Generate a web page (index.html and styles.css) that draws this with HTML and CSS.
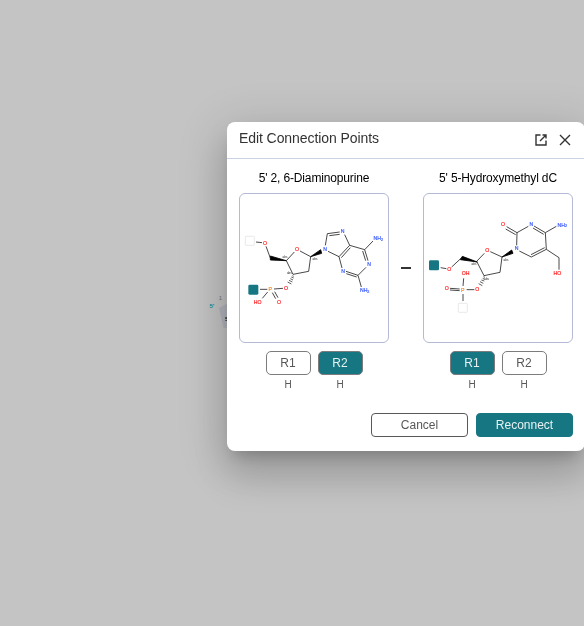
FILE: index.html
```
<!DOCTYPE html>
<html lang="en">
<head>
<meta charset="utf-8">
<title>Edit Connection Points</title>
<link rel="stylesheet" href="styles.css">
</head>
<body>
<svg class="canvas" viewBox="200 280 40 60" aria-hidden="true">
  <path class="monomer" d="M219 308 L228 303 H240 V328 H223.5 Z"/>
  <text class="canvas-end" x="209.5" y="308">5'</text>
  <text class="canvas-num" x="218.8" y="299.7">1</text>
  <text class="canvas-label" x="225" y="321">5</text>
</svg>
<section class="dialog" role="dialog">
  <header class="dialog-header">
    <h1>Edit Connection Points</h1>
    <div class="header-actions">
      <svg class="icon" viewBox="0 0 16 16"><path d="M7.5 3H3v10h10V8.5M9.5 3H13v3.5M13 3L7 9"/></svg>
      <svg class="icon" viewBox="0 0 16 16"><path d="M3 3l10 10M13 3L3 13"/></svg>
    </div>
  </header>
  <main class="points">
    <div class="monomer-column">
      <h2>5' 2, 6-Diaminopurine</h2>
      <div class="structure">
        <svg viewBox="6 6 444 444">
          <rect class="free" x="22" y="133" width="27" height="27" rx="2"/>
          <rect class="used" x="31" y="278" width="30" height="30" rx="4"/>
          <path class="bond" d="M54 150L72 152M84 163L97 198M145 206L169 180M186 177L218 194L212 238L165 247L145 206M262 160L268 125M335 160L320 128M335 160L303 194L270 178M303 194L312 228M360 250L384 226M390 206L380 173L335 160M380 173L405 147M360 250L370 285M66 292H88M108 291L135 289M89 300L73 319"/>
          <path class="bond" d="M268 125L305 120M274 131L305 127M337 167L310 197M374 177L383 206M324 238L360 250M325 245L356 255M103 302L113 320M110 299L120 317"/>
          <path class="wedge" d="M145 206L97 192V204Z M218 194L248 173L251 184Z"/>
          <path class="hash" d="M163 251L167 253M160 255L167 258M157 260L165 264M153 265L163 270M149 270L160 276"/>
          <g class="oxygen"><text x="81" y="159">O</text><text x="177" y="177">O</text><text x="144" y="294">O</text><text x="123" y="336">O</text><text x="59" y="336">HO</text></g>
          <text class="phosphorus" x="97" y="297">P</text>
          <g class="nitrogen"><text x="314" y="123">N</text><text x="261" y="177">N</text><text x="393" y="222">N</text><text x="315" y="243">N</text><text x="421" y="144">NH<tspan class="sub" dy="2">2</tspan></text><text x="380" y="300">NH<tspan class="sub" dy="2">2</tspan></text></g>
          <g class="stereo"><text x="141" y="197">abs</text><text x="154" y="247">abs</text><text x="231" y="203">abs</text></g>
        </svg>
      </div>
      <div class="attachments">
        <div class="attachment"><button>R1</button><span>H</span></div>
        <div class="attachment"><button class="selected">R2</button><span>H</span></div>
      </div>
    </div>
    <div class="link"></div>
    <div class="monomer-column">
      <h2>5' 5-Hydroxymethyl dC</h2>
      <div class="structure">
        <svg viewBox="6 6 444 444">
          <rect class="used" x="21" y="205" width="30" height="30" rx="4"/>
          <rect class="free" x="109" y="334" width="27" height="27" rx="2"/>
          <path class="bond" d="M56 227L73 230M89 225L118 198M164 208L187 184M205 179L240 195L234 241L186 251L164 208M284 160L285 122L319 103M336 102L370 122L373 172L411 197V233M370 122L403 103M373 172L328 195L292 177M125 259L123 282M123 306V327M134 293H157"/>
          <path class="bond" d="M285 122L254 104M281 128L251 111M333 108L365 127M368 167L327 188M113 291L84 289M113 296L84 294"/>
          <path class="wedge" d="M166 210L121 193L115 203Z M240 195L269 174L273 184Z"/>
          <path class="hash" d="M184 254L189 256M182 259L188 262M178 264L187 267M174 269L184 274M170 275L181 281"/>
          <g class="oxygen"><text x="243" y="102">O</text><text x="196" y="180">O</text><text x="82" y="237">O</text><text x="131" y="249">OH</text><text x="74" y="294">O</text><text x="166" y="297">O</text><text x="406" y="249">HO</text></g>
          <text class="phosphorus" x="122" y="299">P</text>
          <g class="nitrogen"><text x="328" y="102">N</text><text x="284" y="174">N</text><text x="421" y="104">NH<tspan class="sub" dy="1">2</tspan></text></g>
          <g class="stereo"><text x="156" y="220">abs</text><text x="194" y="263">abs</text><text x="252" y="206">abs</text></g>
        </svg>
      </div>
      <div class="attachments">
        <div class="attachment"><button class="selected">R1</button><span>H</span></div>
        <div class="attachment"><button>R2</button><span>H</span></div>
      </div>
    </div>
  </main>
  <footer class="dialog-footer">
    <button class="cancel">Cancel</button>
    <button class="reconnect">Reconnect</button>
  </footer>
</section>
</body>
</html>
```
FILE: styles.css
```
* { box-sizing: border-box; }
html, body { margin: 0; width: 100%; height: 100%; overflow: hidden; }
body {
  padding: 122px 0 0 227px;
  background: #c4c4c4;
  font-family: "Liberation Sans", Arial, sans-serif;
}
.canvas { position: absolute; left: 200px; top: 280px; width: 40px; height: 60px; }
.monomer { fill: #b4b4be; }
.canvas-end { fill: #168f98; font-size: 6px; font-weight: bold; }
.canvas-num { fill: #777; font-size: 6px; }
.canvas-label { fill: #222; font-size: 6px; font-weight: bold; }
.dialog {
  position: relative;
  width: 358px;
  height: 329px;
  border-radius: 8px;
  background: #fff;
  box-shadow: 0 11px 15px -7px rgba(0, 0, 0, .2), 0 24px 38px 3px rgba(0, 0, 0, .14), 0 9px 46px 8px rgba(0, 0, 0, .12);
  will-change: transform;
}
.dialog-header {
  display: flex;
  justify-content: space-between;
  height: 37px;
  padding: 8px 12px 0;
  border-bottom: 1px solid #cad3e4;
}
h1, h2 { margin: 0; font-weight: 400; white-space: nowrap; }
h1 { color: #333; font-size: 14px; line-height: 17px; letter-spacing: -.08px; }
.header-actions { display: flex; gap: 8px; padding-top: 2px; }
.icon { width: 16px; height: 16px; fill: none; stroke: #333; stroke-width: 1.4; }
.points { display: flex; padding: 12px 12px 0; }
.monomer-column { width: 150px; }
h2 { height: 22px; color: #000; font-size: 12px; line-height: 15px; text-align: center; letter-spacing: -.15px; }
.structure { width: 150px; height: 150px; border: 1px solid #b4b9d6; border-radius: 6px; }
.structure svg { display: block; width: 148px; height: 148px; }
.link { width: 10px; height: 2px; margin: 96px 12px 0; background: #333; }
.attachments { display: flex; justify-content: center; gap: 7px; margin-top: 8px; }
.attachment { width: 45px; text-align: center; }
.attachment span { display: block; margin-top: 4px; color: #585858; font-size: 10px; line-height: 12px; }
button {
  display: block;
  width: 45px;
  height: 24px;
  padding: 0;
  border: 1px solid #7c7c7f;
  border-radius: 5px;
  background: #fff;
  color: #585858;
  font: 12px/22px "Liberation Sans", Arial, sans-serif;
}
button.selected { background: #167782; color: #e6f1f2; }
.dialog-footer { display: flex; justify-content: flex-end; gap: 8px; padding: 22px 12px 0; }
.dialog-footer button { width: 97px; border-color: #585858; border-radius: 4px; }
.dialog-footer .reconnect { border-color: #167782; background: #167782; color: #e6f1f2; }
.structure text { font-size: 15.5px; text-anchor: middle; stroke-width: .6; }
.bond { fill: none; stroke: #1a1a1a; stroke-width: 2.4; }
.hash { fill: none; stroke: #111; stroke-width: 2; }
.wedge { fill: #000; stroke: #000; stroke-width: 2.5; }
.free { fill: #fff; stroke: #e4e4e4; stroke-width: 2.5; }
.used { fill: #167782; }
.oxygen { fill: #ff2525; stroke: #ff2525; }
.nitrogen { fill: #4060ff; stroke: #4060ff; }
.phosphorus { fill: #f09030; stroke: #f09030; }
.structure .sub { font-size: 11px; }
.structure .stereo text { font-size: 9px; fill: #222; }
```
